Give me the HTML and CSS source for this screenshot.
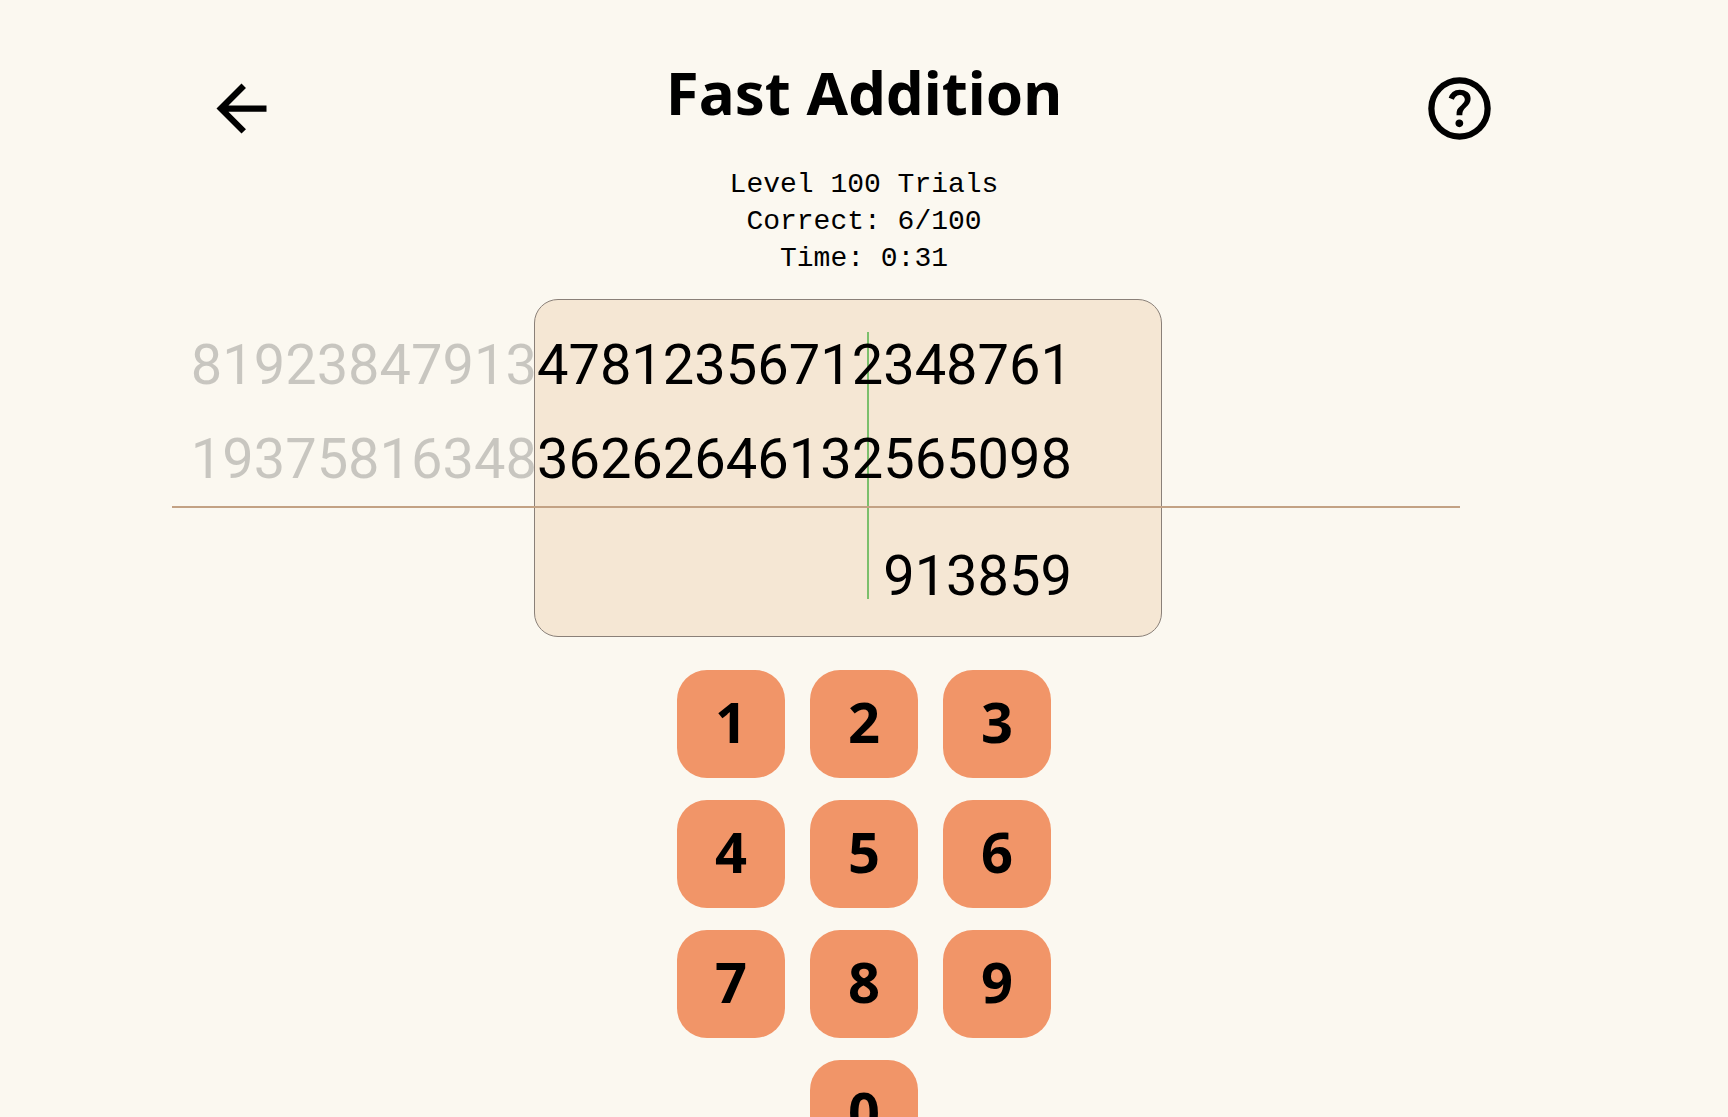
FILE: index.html
```html
<!DOCTYPE html>
<html lang="en">
<head>
    <meta charset="UTF-8">
    <meta name="viewport" content="width=device-width, initial-scale=1">
    <title>Fast Addition</title>
    <link rel="stylesheet" href="styles.css">
</head>
<body>
    <header class="header">
        <button type="button" class="icon-btn" aria-label="Back">
            <svg viewBox="0 -960 960 960"><path d="m313-440 224 224-57 56-320-320 320-320 57 56-224 224h487v80H313Z"/></svg>
        </button>
        <h1>Fast Addition</h1>
        <button type="button" class="icon-btn icon-help" aria-label="Help">
            <svg viewBox="0 -960 960 960"><path d="M478-240q21 0 35.500-14.500T528-290q0-21-14.500-35.500T478-340q-21 0-35.500 14.500T428-290q0 21 14.500 35.500T478-240Zm-36-154h74q0-33 7.500-52t42.500-52q26-26 41-49.500t15-56.500q0-56-41-86t-97-30q-57 0-92.500 30T342-618l66 26q5-18 22.500-39t53.500-21q32 0 48 17.500t16 38.500q0 20-12 37.500T506-526q-44 39-54 59t-10 73Zm38 314q-83 0-156-31.500T197-197q-54-54-85.500-127T80-480q0-83 31.500-156T197-763q54-54 127-85.500T480-880q83 0 156 31.500T763-763q54 54 85.500 127T880-480q0 83-31.500 156T763-197q-54 54-127 85.500T480-80Zm0-80q134 0 227-93t93-227q0-134-93-227t-227-93q-134 0-227 93t-93 227q0 134 93 227t227 93Z"/></svg>
        </button>
    </header>

    <main>
        <div class="status">
            <div>Level 100 Trials</div>
            <div>Correct: 6/100</div>
            <div>Time: 0:31</div>
        </div>

        <section class="problem">
            <div class="panel"></div>
            <div class="cursor"></div>
            <div class="number"><span class="faded">81923847913</span>47812356712348761</div>
            <div class="number"><span class="faded">19375816348</span>36262646132565098</div>
            <hr class="rule">
            <div class="number answer">913859</div>
        </section>

        <div class="keypad">
            <button type="button" class="key">1</button>
            <button type="button" class="key">2</button>
            <button type="button" class="key">3</button>
            <button type="button" class="key">4</button>
            <button type="button" class="key">5</button>
            <button type="button" class="key">6</button>
            <button type="button" class="key">7</button>
            <button type="button" class="key">8</button>
            <button type="button" class="key">9</button>
            <button type="button" class="key key-zero">0</button>
        </div>
    </main>
</body>
</html>
```
FILE: styles.css
```css
body {
    margin: 0;
    padding: 51px 0 20px;
    background: #fbf8f0;
    color: #000;
    font-family: "Noto Sans", sans-serif;
}

.header {
    display: grid;
    grid-template-columns: 1fr auto 1fr;
    align-items: end;
    height: 95px;
    padding: 0 204px;
}

h1 {
    align-self: start;
    margin: 0;
    font-size: 60px;
    line-height: 82px;
    font-weight: bold;
}

.icon-btn {
    width: 75px;
    height: 75px;
    padding: 0;
    border: none;
    background: none;
    cursor: pointer;
}

.icon-btn svg {
    display: block;
    width: 100%;
    height: 100%;
}

.icon-help {
    justify-self: end;
    margin-right: 27px;
}

.status {
    margin: 20px 0 22px;
    font-family: "Liberation Mono", monospace;
    font-size: 28px;
    line-height: 37px;
    text-align: center;
}

.problem {
    position: relative;
    padding: 19px 0 14px;
}

/* highlighted window behind the digits */
.panel {
    position: absolute;
    top: 0;
    bottom: 0;
    left: calc(50% - 330px);
    width: 628px;
    box-sizing: border-box;
    border: 1px solid #8a8078;
    border-radius: 24px;
    background: #f5e7d4;
}

/* marks the column being added */
.cursor {
    position: absolute;
    top: 33px;
    bottom: 38px;
    left: calc(50% + 3px);
    width: 2px;
    background: #7cbf6c;
}

.number {
    position: relative;
    padding-right: calc(50% - 208px);
    font-family: Roboto, sans-serif;
    font-size: 56px;
    line-height: 94px;
    text-align: right;
    white-space: nowrap;
}

.faded {
    color: rgba(0, 0, 0, 0.2);
}

.rule {
    position: relative;
    height: 2px;
    margin: 0 268px 0 172px;
    border: none;
    background: #c3a284;
}

.answer {
    margin-top: 21px;
}

.keypad {
    display: grid;
    grid-template-columns: repeat(3, 108px);
    justify-content: center;
    gap: 22px 25px;
    margin-top: 33px;
}

.key {
    height: 108px;
    padding: 0 0 6px;
    border: none;
    border-radius: 30px;
    background: #f19568;
    color: #000;
    font-family: inherit;
    font-size: 56px;
    font-weight: bold;
    cursor: pointer;
}

.key-zero {
    grid-column: 2;
}
```
